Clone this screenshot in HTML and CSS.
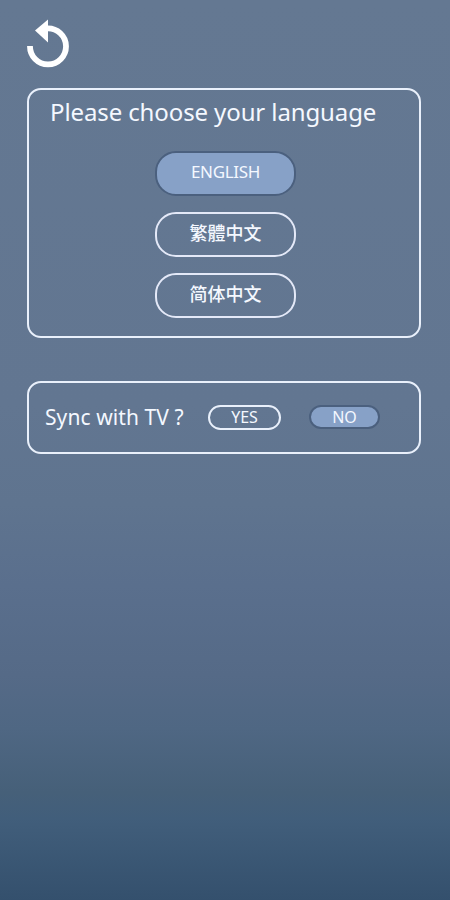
FILE: index.html
```
<!DOCTYPE html>
<html lang="en">
<head>
  <meta charset="UTF-8" />
  <meta name="viewport" content="width=device-width, initial-scale=1.0"/>
  <title>Language Settings</title>
  <link rel="stylesheet" href="styles.css">
</head>
<body>

<div class="settings">
  <button class="back" aria-label="Back">
    <svg width="44" height="50" viewBox="0 0 44 50">
      <path d="M3 27A18 18 0 1 0 20 9.5" fill="none" stroke="#fff" stroke-width="5.8"/>
      <path d="M8 11.5L21 0.5V23.5Z" fill="#fff"/>
    </svg>
  </button>

  <div class="panel language">
    <div class="title">Please choose your language</div>
    <div class="options">
      <button class="option selected">ENGLISH</button>
      <button class="option chinese" lang="zh-Hant">繁體中文</button>
      <button class="option chinese" lang="zh-Hans">简体中文</button>
    </div>
  </div>

  <div class="panel sync">
    <div class="label">Sync with TV ?</div>
    <button class="toggle">YES</button>
    <button class="toggle selected">NO</button>
  </div>
</div>

</body>
</html>
```
FILE: styles.css
```
* {
  box-sizing: border-box;
  font-family: "Noto Sans", "Noto Sans CJK SC", sans-serif;
}

body {
  margin: 0;
  height: 100vh;
  background: linear-gradient(#647892 0%, #627691 45%, #5f748f 56%, #5a6f8d 65%, #556a87 75%, #4f6783 81%, #466079 88%, #415e7b 91%, #34506d 100%);
  color: #f4f8ff;
}

button {
  padding: 0;
  background: none;
  border: none;
  color: inherit;
  cursor: pointer;
}

.settings {
  padding: 19px 29px 0 27px;
}

.back {
  display: block;
  width: 44px;
  height: 50px;
  margin-bottom: 19px;
}

.back svg {
  display: block;
}

.panel {
  border: 2px solid #e9f0fb;
  border-radius: 14px;
}

.language {
  height: 250px;
}

.title {
  padding-left: 21px;
  margin-top: 4px;
  font-size: 24px;
  line-height: 36px;
  letter-spacing: -0.11px;
  white-space: nowrap;
}

.options {
  display: flex;
  flex-direction: column;
  gap: 16px;
  width: 141px;
  margin: 21px 0 0 126px;
}

.option {
  height: 45px;
  padding-bottom: 3px;
  border: 2px solid #e4e9f8;
  border-radius: 21px;
  font-size: 17px;
  line-height: 20px;
  letter-spacing: -0.3px;
}

.chinese {
  padding-bottom: 5px;
  font-family: "Noto Sans CJK SC", sans-serif;
  font-size: 18px;
  font-weight: 500;
  letter-spacing: 0;
}

.option.selected,
.toggle.selected {
  background: #87a1c7;
  border: 2px solid #4b607e;
}

.sync {
  display: flex;
  align-items: center;
  height: 73px;
  margin-top: 43px;
  padding-left: 16px;
}

.label {
  width: 163px;
  padding-bottom: 2px;
  font-size: 21px;
  letter-spacing: 0.08px;
  white-space: nowrap;
}

.toggle {
  width: 73px;
  height: 25px;
  padding-bottom: 1px;
  border: 2px solid #e9f0fb;
  border-radius: 13px;
  font-size: 16px;
  line-height: 20px;
}

.toggle.selected {
  width: 71px;
  height: 24px;
  margin: 0 0 2px 28px;
  padding-bottom: 2px;
}
```
